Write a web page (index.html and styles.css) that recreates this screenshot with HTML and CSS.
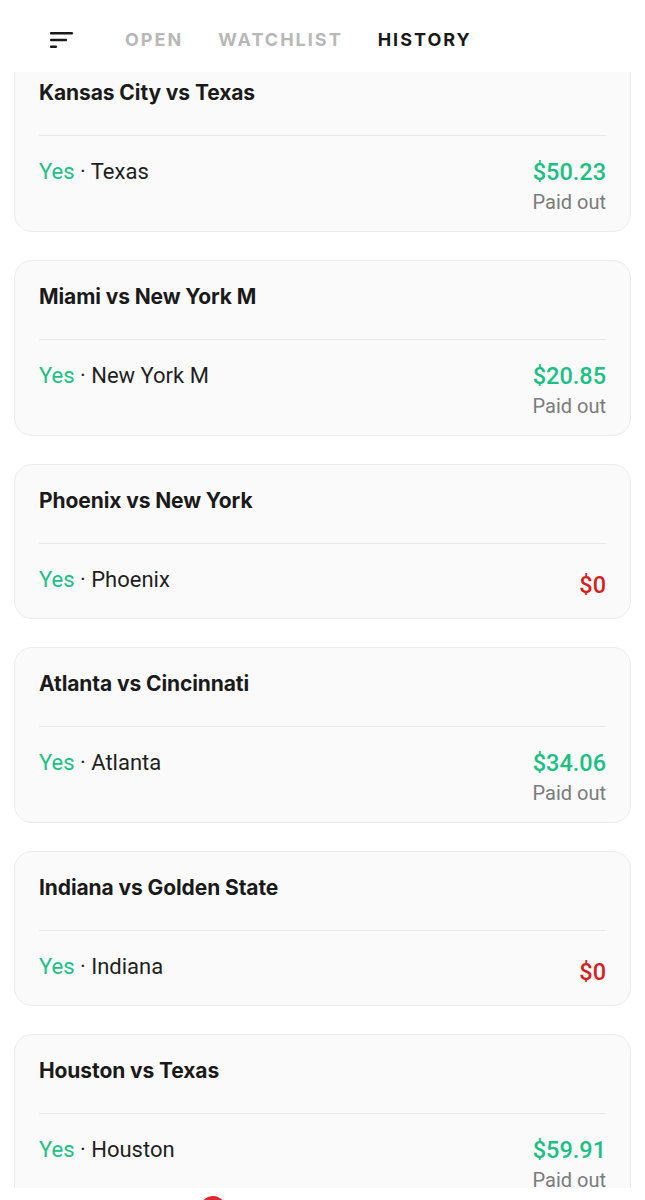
FILE: index.html
```html
<!DOCTYPE html>
<html>
<head>
<meta charset="utf-8">
<link rel="stylesheet" href="styles.css">
</head>
<body>
<div class="app">
  <header class="topbar">
    <button class="menu" aria-label="Sort">
      <svg width="24" height="16" viewBox="0 0 24 16"><rect x="0" y="0" width="23" height="2.6" rx="1" fill="#1a1a1a"/><rect x="0" y="6.7" width="17" height="2.6" rx="1" fill="#1a1a1a"/><rect x="0" y="13.4" width="7" height="2.6" rx="1" fill="#1a1a1a"/></svg>
    </button>
    <nav class="tabs">
      <span class="tab">OPEN</span>
      <span class="tab">WATCHLIST</span>
      <span class="tab active">HISTORY</span>
    </nav>
  </header>
  <main class="viewport">
    <div class="list">
      <section class="card">
        <h2 class="title">Kansas City vs Texas</h2>
        <div class="row">
          <div class="pick"><span class="yes">Yes</span> · Texas</div>
          <div class="result"><div class="amount win">$50.23</div><div class="status">Paid out</div></div>
        </div>
      </section>
      <section class="card">
        <h2 class="title">Miami vs New York M</h2>
        <div class="row">
          <div class="pick"><span class="yes">Yes</span> · New York M</div>
          <div class="result"><div class="amount win">$20.85</div><div class="status">Paid out</div></div>
        </div>
      </section>
      <section class="card">
        <h2 class="title">Phoenix vs New York</h2>
        <div class="row">
          <div class="pick"><span class="yes">Yes</span> · Phoenix</div>
          <div class="result"><div class="amount loss">$0</div></div>
        </div>
      </section>
      <section class="card">
        <h2 class="title">Atlanta vs Cincinnati</h2>
        <div class="row">
          <div class="pick"><span class="yes">Yes</span> · Atlanta</div>
          <div class="result"><div class="amount win">$34.06</div><div class="status">Paid out</div></div>
        </div>
      </section>
      <section class="card">
        <h2 class="title">Indiana vs Golden State</h2>
        <div class="row">
          <div class="pick"><span class="yes">Yes</span> · Indiana</div>
          <div class="result"><div class="amount loss">$0</div></div>
        </div>
      </section>
      <section class="card">
        <h2 class="title">Houston vs Texas</h2>
        <div class="row">
          <div class="pick"><span class="yes">Yes</span> · Houston</div>
          <div class="result"><div class="amount win">$59.91</div><div class="status">Paid out</div></div>
        </div>
      </section>
    </div>
  </main>
  <footer class="bottombar">
    <span class="dot"></span>
  </footer>
</div>
</body>
</html>
```
FILE: styles.css
```css
* { box-sizing: border-box; }
html, body { margin: 0; padding: 0; background: #fff; }
body { font-family: "Roboto", "Liberation Sans", sans-serif; color: #1a1a1a; }
.app { width: 645px; height: 1200px; display: flex; flex-direction: column; overflow: hidden; }
.topbar {
  height: 72px; flex: none; display: flex; align-items: center;
  background: #fff; position: relative; z-index: 2;
  padding: 7px 0 0 50px;
}
.menu { border: 0; background: none; padding: 0; width: 24px; height: 16px; display: flex; }
.tabs { display: flex; gap: 35px; margin-left: 51px; }
.tab {
  font-family: "Inter", "Liberation Sans", sans-serif; font-weight: 700;
  font-size: 18px; letter-spacing: 2px; color: #b8b8b8;
}
.tab.active { color: #1a1a1a; }
.viewport { height: 1116px; flex: none; overflow: hidden; }
.list { display: flex; flex-direction: column; gap: 28px; padding: 0 14px; margin-top: -16px; }
.card {
  background: #fafafa; border: 1px solid #ececec; border-radius: 18px;
  padding: 0 24px;
}
.title {
  margin: 0; padding: 22px 0 28px; font-family: "Inter", "Liberation Sans", sans-serif;
  font-weight: 700; font-size: 21px; line-height: 28px; color: #1a1a1a;
  border-bottom: 1px solid #e9e9e9;
  letter-spacing: -0.1px;
}
.row { display: flex; justify-content: space-between; align-items: flex-start; padding: 21px 0 14px; }
.pick { font-size: 22px; line-height: 30px; color: #1f1f1f; font-weight: 400; }
.yes { color: #20c086; }
.result { display: flex; flex-direction: column; align-items: flex-end; }
.amount { font-size: 23.5px; line-height: 30px; font-weight: 500; }
.amount.win { color: #1dbf84; }
.amount.loss { color: #d61f1f; margin: 5px 0 4px; }
.status { font-size: 20px; line-height: 30px; color: #7b7b7b; font-weight: 400; }
.bottombar { flex: 1; background: #fff; position: relative; z-index: 2; }
.dot {
  position: absolute; left: 200px; top: 8px; width: 26px; height: 26px;
  border-radius: 50%; background: #e0262f;
}
```
